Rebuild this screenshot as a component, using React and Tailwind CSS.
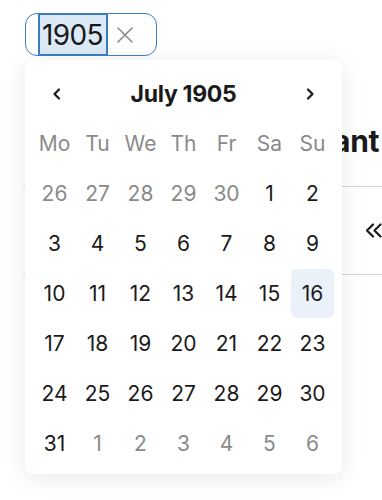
import React from 'react';

const weekdays = ['Mo', 'Tu', 'We', 'Th', 'Fr', 'Sa', 'Su'];

// July 1905 starts on a Saturday; grid runs 26 Jun .. 6 Aug
const buildDays = () => {
    const days = [];
    [26, 27, 28, 29, 30].forEach(d => days.push({ d, out: true }));
    for (let d = 1; d <= 31; d++) days.push({ d, out: false });
    [1, 2, 3, 4, 5, 6].forEach(d => days.push({ d, out: true }));
    return days;
};

const Chevron = ({ dir }) => (
    <svg width="14" height="14" viewBox="0 0 14 14" fill="none">
        <path
            d={dir === 'left' ? 'M9 2.5 4.5 7 9 11.5' : 'M5 2.5 9.5 7 5 11.5'}
            stroke="#1a1a1a"
            strokeWidth="2.2"
            strokeLinecap="round"
            strokeLinejoin="round"
        />
    </svg>
);

const App = () => {
    const days = buildDays();

    return (
        <div className="relative w-[382px] h-[500px] overflow-hidden bg-white font-['Inter',sans-serif] text-[#1a1a1a]">
            {/* page content behind the popup */}
            <div className="pt-[13px] pl-[25px]">
                <div className="flex items-center h-[43px] w-[132px] border-[1.5px] border-[#3b7dc4] rounded-[12px]">
                    <div className="ml-[12px] h-[43px] w-[70px] -my-[1.5px] border-2 border-[#3b7dc4] bg-[#dce9f7] flex items-center pl-[2px] text-[28px] leading-none tracking-[-0.6px]">
                        1905
                    </div>
                    <svg className="ml-[8px]" width="18" height="18" viewBox="0 0 18 18" fill="none">
                        <path d="M2 2 16 16M16 2 2 16" stroke="#8a8a8a" strokeWidth="1.6" strokeLinecap="round" />
                    </svg>
                </div>
            </div>

            <div className="pl-[23px] w-[600px]">
                <div className="mt-[65px] w-[356px] flex justify-end">
                    <h1 className="shrink-0 text-[30px] font-bold leading-[40px] whitespace-nowrap tracking-[-0.4px]">Calendar Assistant</h1>
                </div>
                <div className="mt-[25px] border-t border-[#d4d4d4] h-[88px] flex items-center justify-end pr-[218px]">
                    <svg width="17" height="15" viewBox="0 0 17 15" fill="none">
                        <path d="M8 1.5 2 7.5 8 13.5M15.5 1.5 9.5 7.5 15.5 13.5" stroke="#1a1a1a" strokeWidth="2.2" strokeLinecap="round" strokeLinejoin="round" />
                    </svg>
                </div>
                <div className="border-t border-[#d4d4d4]" />
            </div>

            {/* date picker popup */}
            <div className="absolute top-[60px] left-[25px] w-[317px] h-[414px] bg-white rounded-[8px] shadow-[0_4px_24px_rgba(0,0,0,0.09)] px-[8px] pt-[14px]">
                <div className="flex items-center justify-between h-[40px] px-[17px]">
                    <Chevron dir="left" />
                    <span className="text-[23px] font-bold tracking-[-0.3px]">July 1905</span>
                    <Chevron dir="right" />
                </div>
                <div className="grid grid-cols-7 mt-[4px]">
                    {weekdays.map(w => (
                        <div key={w} className="h-[50px] flex items-center justify-center text-[21px] leading-none text-[#8a8a8a]">
                            {w}
                        </div>
                    ))}
                    {days.map((day, i) => (
                        <div key={i} className="h-[50px] flex items-center justify-center">
                            <div
                                className={
                                    day.d === 16 && !day.out
                                        ? 'w-[43px] h-[49px] rounded-[6px] bg-[#eaf1f8] flex items-center justify-center text-[21px] leading-none'
                                        : day.out
                                        ? 'text-[21px] leading-none text-[#8a8a8a]'
                                        : 'text-[21px] leading-none text-[#1a1a1a]'
                                }
                            >
                                {day.d}
                            </div>
                        </div>
                    ))}
                </div>
            </div>
        </div>
    );
};

export default App;
